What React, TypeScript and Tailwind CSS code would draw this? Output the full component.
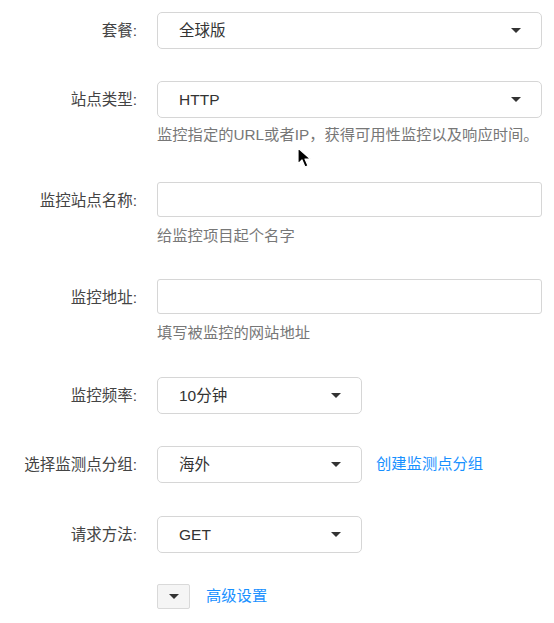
import type { ReactNode } from "react"

const font = { fontFamily: '"Liberation Sans", "Noto Sans CJK SC", sans-serif' }

function Caret({ className = "" }: { className?: string }) {
  return (
    <svg width="10" height="5" viewBox="0 0 10 5" className={className}>
      <path d="M0 0h10L5 5z" fill="#333" />
    </svg>
  )
}

function Row({ label, children, className = "" }: { label: string; children: ReactNode; className?: string }) {
  return (
    <div className={`flex items-start ${className}`}>
      <div className="w-[137px] shrink-0 text-right text-[15.5px] text-[#444] leading-[37px] whitespace-nowrap">{label}:</div>
      <div className="ml-[20px] flex-1">{children}</div>
    </div>
  )
}

function Select({ value, short = false }: { value: string; short?: boolean }) {
  return (
    <div
      className={`flex h-[37px] items-center justify-between rounded-[5px] border border-[#d6d6d6] bg-white pl-[21px] pr-[20px] text-[15.5px] text-[#333] ${
        short ? "w-[205px]" : "w-[385px]"
      }`}
    >
      <span>{value}</span>
      <Caret />
    </div>
  )
}

function Input() {
  return <div className="h-[35px] w-[385px] rounded-[3px] border border-[#d6d6d6] bg-white" />
}

function Hint({ children }: { children: ReactNode }) {
  return <div className="mt-[9px] text-[15.3px] leading-[20px] text-[#777]">{children}</div>
}

export default function App() {
  return (
    <div className="relative h-[623px] w-[554px] overflow-hidden bg-white" style={font}>
      <div className="flex flex-col pt-[12px]">
        <Row label="套餐">
          <Select value="全球版" />
        </Row>
        <Row label="站点类型" className="mt-[32px]">
          <Select value="HTTP" />
          <div className="mt-[7px] text-[15.3px] leading-[20px] text-[#777] whitespace-nowrap">
            监控指定的URL或者IP，获得可用性监控以及响应时间。
          </div>
        </Row>
        <Row label="监控站点名称" className="mt-[37px]">
          <Input />
          <Hint>给监控项目起个名字</Hint>
        </Row>
        <Row label="监控地址" className="mt-[33px]">
          <Input />
          <Hint>填写被监控的网站地址</Hint>
        </Row>
        <Row label="监控频率" className="mt-[34px]">
          <Select value="10分钟" short />
        </Row>
        <Row label="选择监测点分组" className="mt-[32px]">
          <div className="flex items-center">
            <Select value="海外" short />
            <a className="ml-[14px] text-[15.3px] text-[#1890ff]">创建监测点分组</a>
          </div>
        </Row>
        <Row label="请求方法" className="mt-[33px]">
          <Select value="GET" short />
        </Row>
        <div className="mt-[31px] flex items-center pl-[157px]">
          <div className="flex h-[25px] w-[33px] items-center justify-center rounded-[2px] border border-[#d9d9d9] bg-[#f5f5f5]">
            <Caret />
          </div>
          <a className="ml-[16px] text-[15.3px] text-[#1890ff]">高级设置</a>
        </div>
      </div>
      <svg className="absolute left-[297px] top-[147px]" width="14" height="22" viewBox="0 0 14 22">
        <path d="M1 1v16l4-4 3 7 3-1.3-3-6.7h5.5z" fill="#000" stroke="#fff" strokeWidth="1.2" strokeLinejoin="round" />
      </svg>
    </div>
  )
}
